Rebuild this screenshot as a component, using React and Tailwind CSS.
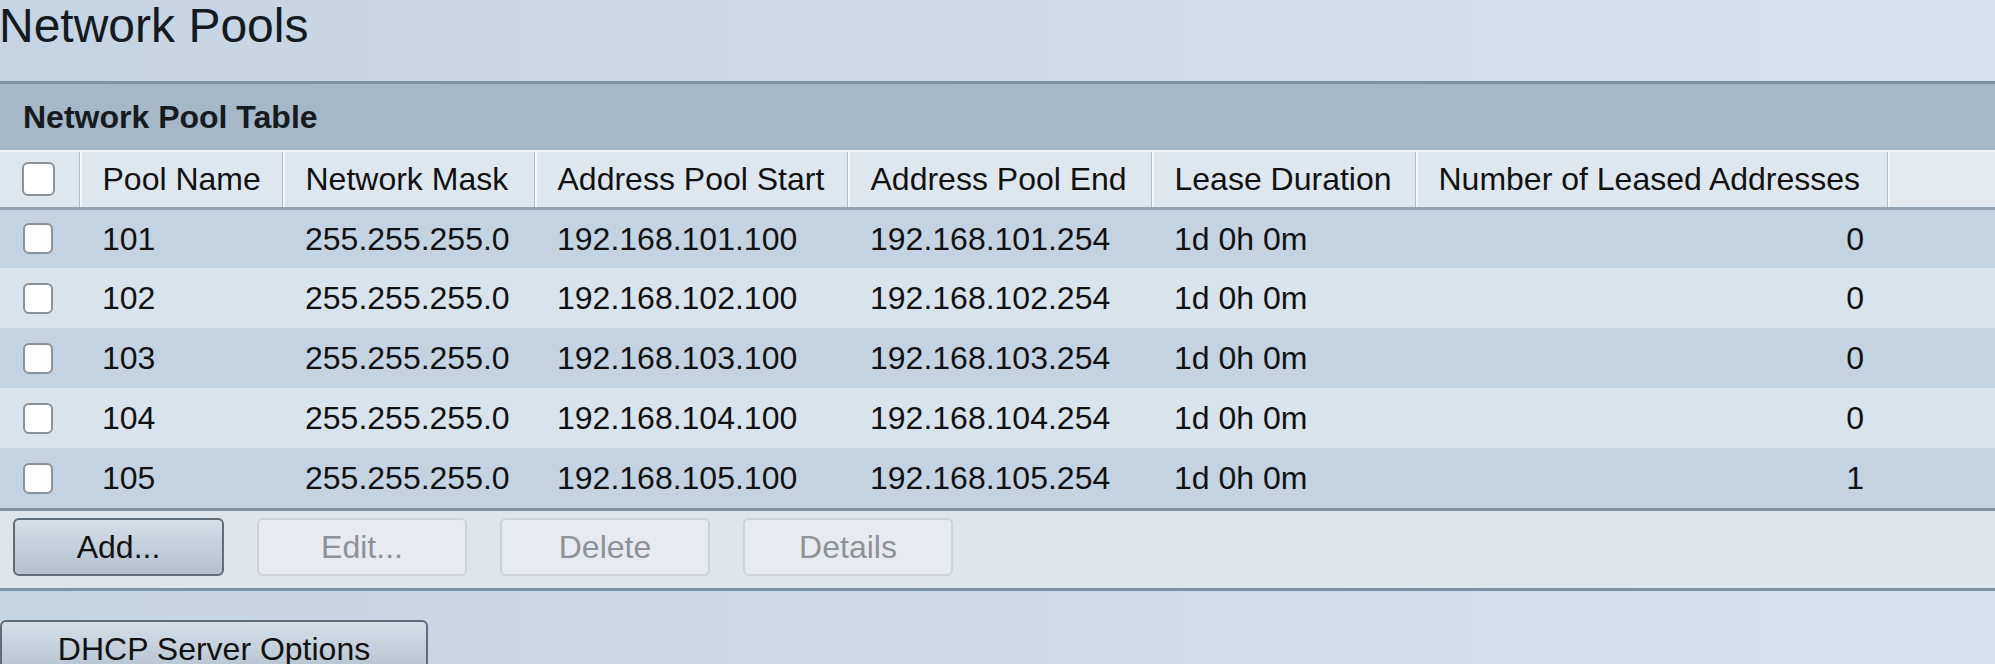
import React from "react";

const pools = [
    { name: "101", mask: "255.255.255.0", start: "192.168.101.100", end: "192.168.101.254", lease: "1d 0h 0m", leased: 0 },
    { name: "102", mask: "255.255.255.0", start: "192.168.102.100", end: "192.168.102.254", lease: "1d 0h 0m", leased: 0 },
    { name: "103", mask: "255.255.255.0", start: "192.168.103.100", end: "192.168.103.254", lease: "1d 0h 0m", leased: 0 },
    { name: "104", mask: "255.255.255.0", start: "192.168.104.100", end: "192.168.104.254", lease: "1d 0h 0m", leased: 0 },
    { name: "105", mask: "255.255.255.0", start: "192.168.105.100", end: "192.168.105.254", lease: "1d 0h 0m", leased: 1 },
];

const headers = ["Pool Name", "Network Mask", "Address Pool Start", "Address Pool End", "Lease Duration", "Number of Leased Addresses"];

const Checkbox = ({ big }) => (
    <span
        className={
            big
                ? "block w-[33px] h-[34px] rounded-[6px] border-2 border-[#8b9297] bg-white"
                : "block w-[30px] h-[31px] rounded-[6px] border-2 border-[#8b9297] bg-white"
        }
    />
);

const Button = ({ label, disabled }) => {
    if (disabled) {
        return (
            <button className="w-[210px] h-[58px] rounded-[6px] border-2 border-[#cdd3d8] bg-[#e7ebef] text-[#8c9298] text-[32px]">
                {label}
            </button>
        );
    }
    return (
        <button className="w-[211px] h-[58px] rounded-[6px] border-2 border-[#5f6d78] bg-gradient-to-b from-[#d6dfe7] via-[#c3cfda] to-[#b3c2cf] text-[#111] text-[32px]">
            {label}
        </button>
    );
};

export default function App() {
    return (
        <div className="h-[664px] overflow-hidden bg-gradient-to-r from-[#c5d4e3] to-[#d7e1eb] text-[#111] font-['Liberation_Sans',Arial,sans-serif]">
            <div className="h-[81px] text-[48px] leading-[1.1] text-[#151a1f] -ml-[1px]">Network Pools</div>

            <div className="h-[69px] border-t-[3px] border-[#7c91a1] bg-[#a5b8c7] flex items-center pl-[23px] text-[32px] font-bold text-[#161b20]">
                Network Pool Table
            </div>

            <table className="w-[1995px] table-fixed border-collapse text-[32px]">
                <colgroup>
                    <col className="w-[79px]" />
                    <col className="w-[203px]" />
                    <col className="w-[252px]" />
                    <col className="w-[313px]" />
                    <col className="w-[304px]" />
                    <col className="w-[264px]" />
                    <col className="w-[472px]" />
                    <col />
                </colgroup>
                <thead>
                    <tr className="h-[57px] bg-[#dee6ee] border-t-2 border-t-[#eef3f7] border-b-[3px] border-b-[#8fa2b1]">
                        <th className="pl-[22px] border-r border-r-[#b0bdc9]">
                            <Checkbox big />
                        </th>
                        {headers.map((h) => (
                            <th key={h} className="pl-[23px] text-left font-normal whitespace-nowrap border-r border-r-[#b0bdc9] shadow-[inset_2px_0_0_#f4f7fa]">
                                {h}
                            </th>
                        ))}
                        <th className="shadow-[inset_2px_0_0_#f4f7fa] bg-[#e3e9ef]"></th>
                    </tr>
                </thead>
                <tbody>
                    {pools.map((p, i) => (
                        <tr key={p.name} className={i % 2 === 0 ? "h-[60px] bg-[#c4d3e2]" : "h-[60px] bg-[#d9e3ec]"}>
                            <td className="pl-[23px]">
                                <Checkbox />
                            </td>
                            <td className="pl-[23px]">{p.name}</td>
                            <td className="pl-[23px]">{p.mask}</td>
                            <td className="pl-[23px]">{p.start}</td>
                            <td className="pl-[23px]">{p.end}</td>
                            <td className="pl-[23px]">{p.lease}</td>
                            <td className="pr-[23px] text-right">{p.leased}</td>
                            <td></td>
                        </tr>
                    ))}
                </tbody>
            </table>

            <div className="h-[83px] border-t-[3px] border-b-[3px] border-[#7f93a2] bg-[#dee5eb] flex items-start pt-[7px] pl-[13px] gap-[33px]">
                <Button label="Add..." />
                <Button label="Edit..." disabled />
                <Button label="Delete" disabled />
                <Button label="Details" disabled />
            </div>

            <div className="pt-[29px]">
                <button className="w-[428px] h-[58px] rounded-[6px] border-2 border-[#5f6d78] bg-gradient-to-b from-[#d6dfe7] via-[#c3cfda] to-[#b3c2cf] text-[#111] text-[32px]">
                    DHCP Server Options
                </button>
            </div>
        </div>
    );
}
